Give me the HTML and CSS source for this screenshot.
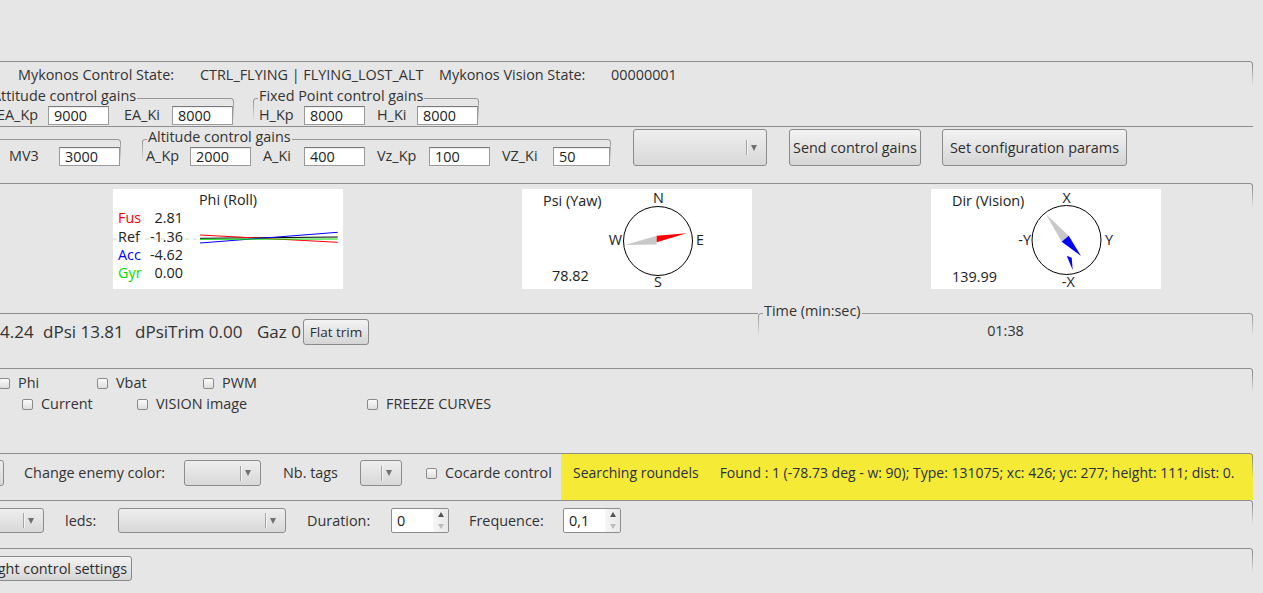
FILE: index.html
```html
<!DOCTYPE html>
<html>
<head>
<meta charset="utf-8">
<title>Mykonos</title>
<link rel="stylesheet" href="styles.css">
</head>
<body>
<div class="app">

  <section class="frame sec-a">
    <div class="state-row">
      <span>Mykonos Control State:</span>
      <span>CTRL_FLYING | FLYING_LOST_ALT</span>
      <span>Mykonos Vision State:</span>
      <span>00000001</span>
    </div>
    <div class="row-a">
      <div class="gb gb-att">
        <div class="gb-head"><span class="gb-title">Attitude control gains</span></div>
        <div class="fields">
          <span class="lbl">EA_Kp</span><span class="inp">9000</span>
          <span class="lbl">EA_Ki</span><span class="inp">8000</span>
        </div>
      </div>
      <div class="gb gb-fix">
        <div class="gb-head"><span class="gb-title">Fixed Point control gains</span></div>
        <div class="fields">
          <span class="lbl">H_Kp</span><span class="inp">8000</span>
          <span class="lbl">H_Ki</span><span class="inp">8000</span>
        </div>
      </div>
    </div>
  </section>

  <section class="frame plain sec-b">
    <div class="row-b">
      <div class="gb gb-mv">
        <div class="gb-head"><span class="gb-title"></span></div>
        <div class="fields">
          <span class="lbl">MV3</span><span class="inp">3000</span>
        </div>
      </div>
      <div class="gb gb-alt">
        <div class="gb-head"><span class="gb-title">Altitude control gains</span></div>
        <div class="fields">
          <span class="lbl">A_Kp</span><span class="inp">2000</span>
          <span class="lbl">A_Ki</span><span class="inp">400</span>
          <span class="lbl">Vz_Kp</span><span class="inp">100</span>
          <span class="lbl">VZ_Ki</span><span class="inp">50</span>
        </div>
      </div>
      <div class="combo combo-big"><span class="sep"></span><span class="arr"></span></div>
      <div class="btn btn-send">Send control gains</div>
      <div class="btn btn-conf">Set configuration params</div>
    </div>
  </section>

  <section class="frame sec-c">
    <div class="plot">
      <svg width="230" height="100" viewBox="0 0 230 100">
        <text x="115" y="16" text-anchor="middle">Phi (Roll)</text>
        <line x1="0" y1="50" x2="87" y2="50" stroke="#d4d4d4" stroke-dasharray="4 4"/>
        <polyline points="87,49.3 224.7,48" fill="none" stroke="#000"/>
        <polyline points="87,46 224.7,53.3" fill="none" stroke="#f00"/>
        <polyline points="87,54 224.7,43.3" fill="none" stroke="#00f"/>
        <polyline points="87,50.3 224.7,50" fill="none" stroke="#0d0"/>
        <text x="5" y="34" fill="#f00">Fus</text><text x="70" y="34" text-anchor="end">2.81</text>
        <text x="5" y="52.5">Ref</text><text x="70" y="52.5" text-anchor="end">-1.36</text>
        <text x="5" y="71" fill="#00f">Acc</text><text x="70" y="71" text-anchor="end">-4.62</text>
        <text x="5" y="89" fill="#0d0">Gyr</text><text x="70" y="89" text-anchor="end">0.00</text>
      </svg>
    </div>
    <div class="plot">
      <svg width="230" height="100" viewBox="0 0 230 100">
        <text x="21" y="17">Psi (Yaw)</text>
        <text x="30" y="92">78.82</text>
        <circle cx="136" cy="52" r="34.5" fill="none" stroke="#000"/>
        <text x="136.5" y="14" text-anchor="middle">N</text>
        <text x="136" y="98" text-anchor="middle">S</text>
        <text x="100" y="56" text-anchor="end">W</text>
        <text x="174" y="56">E</text>
        <polygon points="103,56 134.7,46.7 134.7,55.5" fill="#c8c8c8"/>
        <polygon points="134.7,46.7 134.7,53.3 164.7,44.3" fill="#f00"/>
      </svg>
    </div>
    <div class="plot">
      <svg width="230" height="100" viewBox="0 0 230 100">
        <text x="21" y="17">Dir (Vision)</text>
        <text x="21" y="92.5">139.99</text>
        <circle cx="135.5" cy="51" r="34.5" fill="none" stroke="#000"/>
        <text x="135.7" y="14" text-anchor="middle">X</text>
        <text x="137.3" y="98" text-anchor="middle">-X</text>
        <text x="100" y="56" text-anchor="end">-Y</text>
        <text x="174" y="56">Y</text>
        <polygon points="115,25.3 130.7,52.7 137.7,46.7" fill="#c8c8c8"/>
        <polygon points="130.7,52.7 137.7,46.7 150,67" fill="#00f"/>
        <polygon points="135.7,66.7 140.7,68.7 141.7,81" fill="#00f"/>
      </svg>
    </div>
  </section>

  <section class="sec-d">
    <div class="d-left">
      <div class="d-row">
        <span class="d-first">4.24</span>
        <span>dPsi 13.81</span>
        <span>dPsiTrim 0.00</span>
        <span>Gaz 0</span>
        <div class="btn btn-flat">Flat trim</div>
      </div>
    </div>
    <div class="gb gb-time">
      <div class="gb-head"><span class="gb-title">Time (min:sec)</span></div>
      <div class="time-val">01:38</div>
    </div>
  </section>

  <section class="frame sec-e">
    <div class="chk-row chk-row1">
      <label class="chk"><span class="box"></span>Phi</label>
      <label class="chk"><span class="box"></span>Vbat</label>
      <label class="chk"><span class="box"></span>PWM</label>
    </div>
    <div class="chk-row chk-row2">
      <label class="chk"><span class="box"></span>Current</label>
      <label class="chk"><span class="box"></span>VISION image</label>
      <label class="chk"><span class="box"></span>FREEZE CURVES</label>
    </div>
  </section>

  <section class="frame sec-f">
    <div class="f-grid">
      <div class="combo combo-f"></div>
      <span class="txt pl20">Change enemy color:</span>
      <div class="combo combo-f"><span class="sep"></span><span class="arr"></span></div>
      <span class="txt pl22">Nb. tags</span>
      <div class="combo combo-f"><span class="sep"></span><span class="arr"></span></div>
      <label class="chk txt pl24"><span class="box"></span>Cocarde control</label>
      <div class="found">
        <span>Searching roundels</span>
        <span>Found : 1 (-78.73 deg - w: 90); Type: 131075; xc: 426; yc: 277; height: 111; dist: 0.</span>
      </div>
    </div>
  </section>

  <section class="frame sec-g">
    <div class="g-grid">
      <div class="combo combo-g"><span class="sep"></span><span class="arr"></span></div>
      <span class="pl21">leds:</span>
      <div class="combo combo-g"><span class="sep"></span><span class="arr"></span></div>
      <span class="pl21">Duration:</span>
      <div class="spin"><span class="val">0</span><span class="spin-btns"><span class="up"></span><span class="down"></span></span></div>
      <span class="pl20">Frequence:</span>
      <div class="spin"><span class="val">0,1</span><span class="spin-btns"><span class="up"></span><span class="down"></span></span></div>
    </div>
  </section>

  <section class="frame sec-h">
    <div class="btn btn-flight">Flight control settings</div>
  </section>

</div>
</body>
</html>
```
FILE: styles.css
```css
* { box-sizing: border-box; margin: 0; padding: 0; }
html, body { width: 1263px; height: 593px; overflow: hidden; }
body {
  background: #e6e6e6;
  font-family: "Open Sans", "Noto Sans", sans-serif;
  font-size: 14.4px;
  line-height: 20px;
  color: #333;
}
.app { padding-top: 61px; width: 1253px; }

/* big frames: top line + fading right edge */
.frame { position: relative; }
.frame::before {
  content: "";
  position: absolute;
  top: 0; left: 0; right: 0;
  height: 24px;
  border-top: 1px solid #8e8e8e;
  border-right: 1px solid #8e8e8e;
  border-top-right-radius: 3px;
  -webkit-mask-image: linear-gradient(#000 20%, transparent);
  mask-image: linear-gradient(#000 20%, transparent);
  pointer-events: none;
}
.frame.plain::before { border-right: 0; border-radius: 0; }

/* group boxes */
.gb { display: flex; flex-direction: column; }
.gb-head { display: flex; height: 14px; line-height: 14px; }
.gb-head::before, .gb-head::after {
  content: "";
  height: 22px;
  margin-top: 9px;
  border-top: 1px solid #989898;
  -webkit-mask-image: linear-gradient(#000 15%, transparent);
  mask-image: linear-gradient(#000 15%, transparent);
}
.gb-head::before { width: 4px; border-left: 1px solid #989898; border-top-left-radius: 3px; }
.gb-head::after { flex: 1; border-right: 1px solid #989898; border-top-right-radius: 3px; }
.gb-title { padding: 0 1px; white-space: nowrap; }

.fields { display: grid; align-items: center; margin-top: 2px; padding-right: 1px; }
.fields .inp + .lbl { padding-left: 13px; }
.lbl { white-space: nowrap; }
.inp {
  height: 19px;
  line-height: 17px;
  background: #fff;
  border: 1px solid #9a9a9a;
  border-top-color: #7a7a7a;
  box-shadow: inset 0 1px 1px rgba(0,0,0,0.08);
  padding-left: 5px;
  color: #222;
}

/* section A */
.sec-a { height: 65px; padding-top: 4px; }
.state-row {
  display: grid;
  grid-template-columns: 182px 239px 172px auto;
  padding-left: 18px;
  height: 20px;
  white-space: nowrap;
}
.row-a { display: flex; gap: 19px; margin-top: 4px; }
.gb-att { margin-left: -14px; }
.gb-att .fields { grid-template-columns: 51px 61px 63px 61px; padding-left: 11px; }
.gb-att .fields .inp + .lbl { padding-left: 15px; }
.gb-fix .fields { grid-template-columns: 45px 61px 52px 61px; padding-left: 6px; }
.gb-fix .fields .inp + .lbl { padding-left: 12px; }

/* section B */
.sec-b { height: 57px; padding-top: 3px; }
.row-b { display: flex; align-items: flex-start; gap: 21px; }
.row-b .gb { margin-top: 1px; }
.gb-mv { margin-left: -20px; }
.gb-mv .fields { grid-template-columns: 50px 61px; padding-left: 29px; }
.gb-alt .fields { grid-template-columns: 44px 61px 53px 61px 64px 61px 63px 57px; padding-left: 4px; }
.gb-alt .fields .inp + .lbl { padding-left: 12px; }
.combo-big { width: 134px; height: 37px; margin-left: 1px; }
.btn-send { width: 132px; height: 37px; margin-left: 1px; }
.btn-conf { width: 185px; height: 37px; }

/* combos & buttons */
.combo {
  display: flex;
  align-items: center;
  justify-content: flex-end;
  padding-right: 9px;
  border: 1px solid #8c8c8c;
  border-radius: 3px;
  background: linear-gradient(#eeeeee, #d8d8d8);
}
.sep { width: 1px; height: 15px; background: #a4a4a4; margin-right: 4px; box-shadow: 1px 0 0 #f4f4f4; }
.arr {
  width: 0; height: 0;
  border-left: 3.5px solid transparent;
  border-right: 3.5px solid transparent;
  border-top: 6px solid #707070;
}
.btn {
  display: flex;
  align-items: center;
  justify-content: center;
  white-space: nowrap;
  border: 1px solid #8a8a8a;
  border-radius: 3px;
  background: linear-gradient(#f3f3f3, #d5d5d5);
  color: #2e2e2e;
}

/* section C: plots */
.sec-c { height: 130px; padding: 6px 0 0 113px; display: flex; gap: 179px; }
.plot { width: 230px; height: 100px; background: #fff; }
.plot svg { display: block; font-family: "Open Sans", "Noto Sans", sans-serif; font-size: 14.4px; fill: #222; }

/* section D */
.sec-d { height: 55px; display: flex; align-items: flex-start; }
.d-left { flex: 1; border-top: 1px solid #8e8e8e; padding-top: 5px; }
.d-row {
  display: grid;
  grid-template-columns: 43px 92px 122px 46px auto;
  align-items: center;
  height: 26px;
  font-size: 17px;
  white-space: nowrap;
}
.d-first { text-align: right; padding-right: 16px; }
.btn-flat { width: 66px; height: 26px; font-size: 13.5px; }
.gb-time { width: 495px; margin-top: -9px; }
.time-val { text-align: center; margin-top: 3px; }

/* section E: checkboxes */
.sec-e { height: 85px; padding-top: 6px; }
.chk-row { display: grid; line-height: 18px; height: 18px; white-space: nowrap; }
.chk-row1 { grid-template-columns: 98px 106px auto; margin-left: -1px; }
.chk-row2 { grid-template-columns: 115px 230px auto; padding-left: 22px; margin-top: 3px; }
.chk { display: flex; align-items: center; }
.box {
  width: 11px; height: 11px;
  margin-right: 8px;
  border: 1px solid #8a8a8a;
  border-radius: 2px;
  background: linear-gradient(#fbfbfb, #dedede);
  flex: none;
}

/* section F */
.sec-f { height: 47px; padding-top: 1px; }
.f-grid {
  display: grid;
  grid-template-columns: 44px 180px 77px 99px 42px 159px 1fr;
  align-items: start;
  margin-left: -40px;
  white-space: nowrap;
}
.combo-f { height: 26px; margin-top: 6px; }
.txt { margin-top: 9px; }
.pl20 { padding-left: 20px; }
.pl21 { padding-left: 21px; }
.pl22 { padding-left: 22px; }
.pl24 { padding-left: 24px; }
.found {
  height: 46px;
  background: #f5eb36;
  padding: 9px 0 0 12px;
  display: flex;
  gap: 21px;
  font-size: 14px;
  color: #2a2f45;
}

/* section G */
.sec-g { height: 48px; padding-top: 8px; }
.g-grid {
  display: grid;
  grid-template-columns: 84px 74px 168px 105px 58px 114px 58px;
  align-items: center;
  height: 25px;
  margin-left: -40px;
  white-space: nowrap;
}
.combo-g { height: 25px; }
.spin {
  display: flex;
  height: 25px;
  background: #fff;
  border: 1px solid #8c8c8c;
  border-radius: 2px;
}
.spin .val { flex: 1; padding-left: 5px; line-height: 23px; color: #222; }
.spin-btns { width: 15px; display: flex; flex-direction: column; background: linear-gradient(90deg, #f6f6f6, #e8e8e8); }
.spin-btns span { flex: 1; display: flex; align-items: center; justify-content: center; }
.spin-btns .up::before {
  content: ""; width: 0; height: 0;
  border-left: 3.5px solid transparent; border-right: 3.5px solid transparent;
  border-bottom: 5px solid #555;
}
.spin-btns .down::before {
  content: ""; width: 0; height: 0;
  border-left: 3.5px solid transparent; border-right: 3.5px solid transparent;
  border-top: 5px solid #bdbdbd;
}

/* section H */
.sec-h { height: 45px; padding-top: 8px; }
.btn-flight { width: 163px; height: 25px; margin-left: -31px; justify-content: flex-end; padding-right: 4px; }
```
